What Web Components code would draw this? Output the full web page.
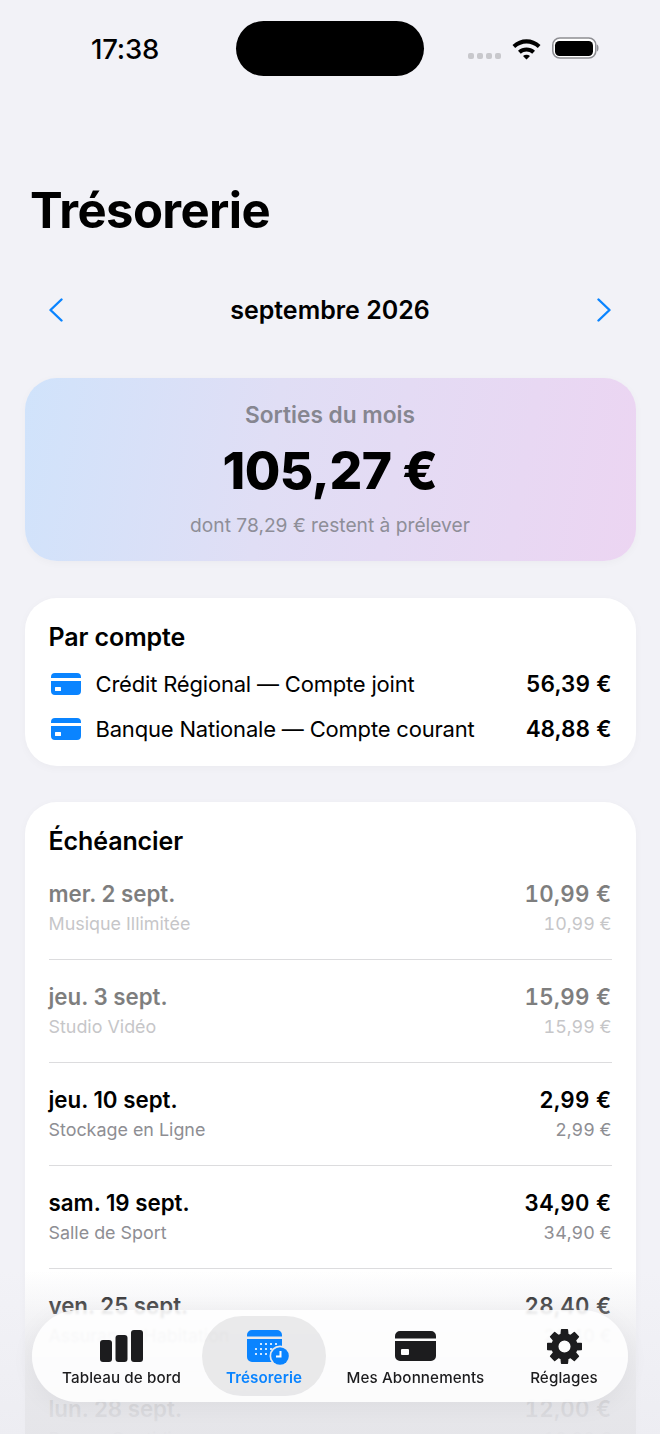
<!DOCTYPE html>
<html lang="fr">
<head>
<meta charset="utf-8">
<title>Trésorerie</title>
<style>
  html, body { margin: 0; height: 100%; }
  body {
    background: #f2f2f7;
    font-family: Inter, "Liberation Sans", sans-serif;
    color: #000;
    overflow: hidden;
  }
</style>
</head>
<body>
<app-screen>
  <status-bar></status-bar>
  <page-title>Trésorerie</page-title>
  <month-nav>septembre 2026</month-nav>
  <total-card label="Sorties du mois" amount="105,27 €" note="dont 78,29 € restent à prélever"></total-card>
  <white-card heading="Par compte">
    <account-row amount="56,39 €">Crédit Régional — Compte joint</account-row>
    <account-row amount="48,88 €">Banque Nationale — Compte courant</account-row>
  </white-card>
  <white-card heading="Échéancier" schedule>
    <schedule-row day="mer. 2 sept." name="Musique Illimitée" amount="10,99 €" paid></schedule-row>
    <schedule-row day="jeu. 3 sept." name="Studio Vidéo" amount="15,99 €" paid></schedule-row>
    <schedule-row day="jeu. 10 sept." name="Stockage en Ligne" amount="2,99 €"></schedule-row>
    <schedule-row day="sam. 19 sept." name="Salle de Sport" amount="34,90 €"></schedule-row>
    <schedule-row day="ven. 25 sept." name="Assurance Habitation" amount="28,40 €"></schedule-row>
    <schedule-row day="lun. 28 sept." name="Presse Quotidienne" amount="12,00 €"></schedule-row>
  </white-card>
  <tab-bar></tab-bar>
</app-screen>

<script>
// small helper, every element is the same few lines otherwise
function define(name, css, html) {
  customElements.define(name, class extends HTMLElement {
    constructor() {
      super();
      this.attachShadow({ mode: 'open' });
    }
    connectedCallback() {
      const attrs = {};
      for (const a of this.attributes) attrs[a.name] = a.value;
      this.shadowRoot.innerHTML = `<style>${css}</style>${typeof html === 'function' ? html(attrs) : html}`;
    }
  });
}

define('app-screen', `
  :host { display: block; position: relative; height: 1434px; overflow: hidden; padding: 0 24px; box-sizing: border-box; }
`, `<slot></slot>`);

define('status-bar', `
  :host { display: block; height: 55px; margin: 21px -24px 0; position: relative; }
  .time { position: absolute; left: 91px; top: 11px; font-size: 27.5px; line-height: 34px; font-weight: 500; letter-spacing: -.2px; }
  .island { position: absolute; left: 236px; top: 0; width: 188px; height: 55px; border-radius: 28px; background: #000; }
  .dots { position: absolute; left: 468px; top: 32px; display: flex; gap: 3px; }
  .dots i { width: 6px; height: 6px; border-radius: 2px; background: #c8c8cc; }
  svg { position: absolute; }
`, `
  <span class="time">17:38</span>
  <div class="island"></div>
  <div class="dots"><i></i><i></i><i></i><i></i></div>
  <svg style="left:512px;top:16px" width="29" height="23" viewBox="0 0 29 23">
    <path d="M.5 8C8.500 .2 20.500 .2 28.500 8L25.800 11C19.300 5 9.700 5 3.200 11Z M6 13.700C10.800 9.300 18.200 9.300 23 13.700L20.200 16.700C16.700 13.600 12.300 13.600 8.800 16.700Z M11 18.900C13 17.300 16 17.300 18 18.900L14.500 22.500Z" fill="#000"/>
  </svg>
  <svg style="left:552px;top:16px" width="47" height="23" viewBox="0 0 47 23">
    <rect x=".8" y="1" width="43" height="20" rx="7" fill="#fff" stroke="#8e8e93" stroke-width="1.600"/>
    <rect x="3" y="4" width="38" height="15" rx="4.500" fill="#000"/>
    <path d="M45 7.500c2 .5 2 6.500 0 7z" fill="#8e8e93"/>
  </svg>
`);

define('page-title', `
  :host { display: block; margin: 107px 0 0 6px; font-size: 49px; line-height: 56px; font-weight: 700; letter-spacing: -.6px; }
`, `<slot></slot>`);

define('month-nav', `
  :host { display: flex; align-items: center; justify-content: space-between; height: 36px; margin-top: 53px; padding: 0 25px; font-size: 25px; font-weight: 600; }
  svg { display: block; width: 14px; height: 24px; }
  path { fill: none; stroke: #0a84ff; stroke-width: 2.400; stroke-linecap: round; stroke-linejoin: round; }
`, `
  <svg viewBox="0 0 14 24"><path d="M12.500 1.500 1.500 12l11 10.500"/></svg>
  <slot></slot>
  <svg viewBox="0 0 14 24"><path d="M1.500 1.500 12.500 12l-11 10.500"/></svg>
`);

define('total-card', `
  :host { display: block; margin: 50px .5px 0; height: 183px; box-sizing: border-box; padding-top: 23px; border-radius: 32px; text-align: center;
    background: linear-gradient(100deg, #d0e3fb 0%, #e0def5 40%, #ecd5f2 100%); box-shadow: 0 2px 8px rgba(0,0,0,.03); }
  .label { font-size: 22.700px; line-height: 28px; font-weight: 600; color: #868690; }
  .amount { font-size: 51.500px; line-height: 62px; font-weight: 800; margin-top: 10px; letter-spacing: -.5px; }
  .note { font-size: 19.200px; line-height: 26px; color: #8e8e98; margin-top: 11px; }
`, a => `
  <div class="label">${a.label}</div>
  <div class="amount">${a.amount}</div>
  <div class="note">${a.note}</div>
`);

define('white-card', `
  :host { display: block; margin: 37px .5px 0; padding: 23px 24px 15px; border-radius: 32px; background: #fff; box-shadow: 0 2px 10px rgba(0,0,0,.03); }
  :host([schedule]) { margin-top: 36px; }
  h2 { margin: 0 0 8px; font-size: 25px; line-height: 32px; font-weight: 600; letter-spacing: -.1px; }
  :host([schedule]) h2 { margin-bottom: 0; }
`, a => `<h2>${a.heading}</h2><slot></slot>`);

define('account-row', `
  :host { display: flex; align-items: center; height: 45px; font-size: 22px; letter-spacing: -.19px; }
  svg { width: 30px; height: 22px; margin: 0 15px 0 2px; flex: none; }
  .name { flex: 1; }
  .amount { font-weight: 600; letter-spacing: 0; font-variant-numeric: tabular-nums; font-size: 22.500px; }
`, a => `
  <svg viewBox="0 0 30 22"><path fill="#0a84ff" fill-rule="evenodd" d="M4 0H26A4 4 0 0 1 30 4V5H0V4A4 4 0 0 1 4 0ZM0 8H30V18A4 4 0 0 1 26 22H4A4 4 0 0 1 0 18ZM4 14.500V17.500A.6.6 0 0 0 4.600 18H9.400A.6.6 0 0 0 10 17.500V14.500A.6.6 0 0 0 9.400 14H4.600A.6.6 0 0 0 4 14.500Z"/></svg>
  <span class="name"><slot></slot></span>
  <span class="amount">${a.amount}</span>
`);

define('schedule-row', `
  :host { display: grid; grid-template-columns: 1fr auto; grid-auto-rows: 30px; align-content: start; height: 103px; box-sizing: border-box; padding-top: 22px; border-bottom: 1px solid #dcdcde; }
  :host([paid]) span { opacity: .5; }
  .day, .amount { font-size: 22.300px; line-height: 30px; font-weight: 600; }
  .amount { font-variant-numeric: tabular-nums; letter-spacing: .3px; }
  .name, .sub { font-size: 17.900px; line-height: 30px; color: #8e8e93; }
  .sub { font-variant-numeric: tabular-nums; }
  .amount, .sub { text-align: right; }
`, a => `
  <span class="day">${a.day}</span>
  <span class="amount">${a.amount}</span>
  <span class="name">${a.name}</span>
  <span class="sub">${a.amount}</span>
`);

// gear drawn from its teeth, 8 of them
function gearPath(cx, cy, ro, ri, hole) {
  const pts = [];
  for (let i = 0; i < 8; i++) {
    const a = i * Math.PI / 4 - Math.PI / 2;
    for (const [r, d] of [[ri, -.27], [ro, -.17], [ro, .17], [ri, .27]]) {
      pts.push((cx + r * Math.cos(a + d)).toFixed(2) + ' ' + (cy + r * Math.sin(a + d)).toFixed(2));
    }
  }
  return `M${pts.join('L')}Z M${cx} ${cy - hole}A${hole} ${hole} 0 1 0 ${cx} ${cy + hole}A${hole} ${hole} 0 1 0 ${cx} ${cy - hole}Z`;
}

const barsIcon = `<svg slot="icon" width="44" height="32" viewBox="0 0 44 32"><g fill="#1c1c1e"><rect x="0" y="10" width="12" height="22" rx="3"/><rect x="15.500" y="5" width="12" height="27" rx="3"/><rect x="31" y="0" width="12" height="32" rx="3"/></g></svg>`;
const calIcon = `<svg slot="icon" width="50" height="38" viewBox="0 0 50 38" style="overflow:visible">
  <path fill="#0a84ff" fill-rule="evenodd" d="M13 3H38A5 5 0 0 1 43 8V9.500H8V8A5 5 0 0 1 13 3ZM8 12H43V35H13A5 5 0 0 1 8 30Z"/>
  <g fill="#fff"><circle cx="22" cy="17" r="1.100"/><circle cx="27" cy="17" r="1.100"/><circle cx="32" cy="17" r="1.100"/><circle cx="37" cy="17" r="1.100"/><circle cx="17" cy="22" r="1.100"/><circle cx="22" cy="22" r="1.100"/><circle cx="27" cy="22" r="1.100"/><circle cx="32" cy="22" r="1.100"/><circle cx="17" cy="27" r="1.100"/><circle cx="22" cy="27" r="1.100"/><circle cx="27" cy="27" r="1.100"/></g>
  <circle cx="41" cy="29" r="10.500" fill="#e9e9ec"/><circle cx="41" cy="29" r="8.800" fill="#0a84ff"/>
  <path d="M41.500 24v5.500H37" fill="none" stroke="#fff" stroke-width="2"/>
</svg>`;
const cardIcon = `<svg slot="icon" width="41" height="30" viewBox="0 0 41 30"><path fill="#1c1c1e" fill-rule="evenodd" d="M5 0H36A5 5 0 0 1 41 5V7.500H0V5A5 5 0 0 1 5 0ZM0 10H41V25A5 5 0 0 1 36 30H5A5 5 0 0 1 0 25ZM6 19V23A1 1 0 0 0 7 24H13A1 1 0 0 0 14 23V19A1 1 0 0 0 13 18H7A1 1 0 0 0 6 19Z"/></svg>`;
const gearIcon = `<svg slot="icon" width="37" height="37" viewBox="0 0 37 37"><path fill="#1c1c1e" fill-rule="evenodd" stroke="#1c1c1e" stroke-width="1.500" stroke-linejoin="round" d="${gearPath(18.5, 18.5, 17, 12.5, 6.8)}"/></svg>`;

define('tab-item', `
  :host { display: flex; flex-direction: column; align-items: center; justify-content: flex-end; position: relative; height: 80px; box-sizing: border-box; padding-bottom: 8px; border-radius: 40px; font-size: 15.200px; line-height: 20px; font-weight: 500; color: #1c1c1e; letter-spacing: .1px; white-space: nowrap; }
  :host([active]) { background: rgba(120,120,128,.15); color: #0a84ff; font-weight: 600; }
  .icon { height: 38px; display: flex; align-items: center; margin-bottom: 3px; }
`, `<div class="icon"><slot name="icon"></slot></div><slot></slot>`);

// the glass bar, the row under it just shows through
define('tab-bar', `
  :host { position: absolute; left: 0; right: 0; bottom: 0; height: 164px; background: linear-gradient(rgba(242,242,247,0), rgba(236,236,241,.8)); }
  .scrim { position: absolute; left: 24.5px; right: 24.5px; top: 0; bottom: 0;
    background: linear-gradient(rgba(228,228,232,0) 0%, rgba(228,228,232,.18) 18%, rgba(228,228,232,.5) 43%, rgba(228,228,232,.82) 79%, rgba(228,228,232,.88) 100%); }
  .bar { position: absolute; left: 32px; top: 40px; width: 596px; height: 92px; box-sizing: border-box; padding: 6px 5px 6px 9px; border-radius: 46px;
    background: rgba(255,255,255,.86); backdrop-filter: blur(1px); box-shadow: 0 4px 24px rgba(0,0,0,.05);
    display: grid; grid-template-columns: 161px 124px 179px 1fr; align-items: center; }
`, `
  <div class="scrim"></div>
  <div class="bar">
    <tab-item>${barsIcon}Tableau de bord</tab-item>
    <tab-item active>${calIcon}Trésorerie</tab-item>
    <tab-item>${cardIcon}Mes Abonnements</tab-item>
    <tab-item>${gearIcon}Réglages</tab-item>
  </div>
`);
</script>
</body>
</html>
